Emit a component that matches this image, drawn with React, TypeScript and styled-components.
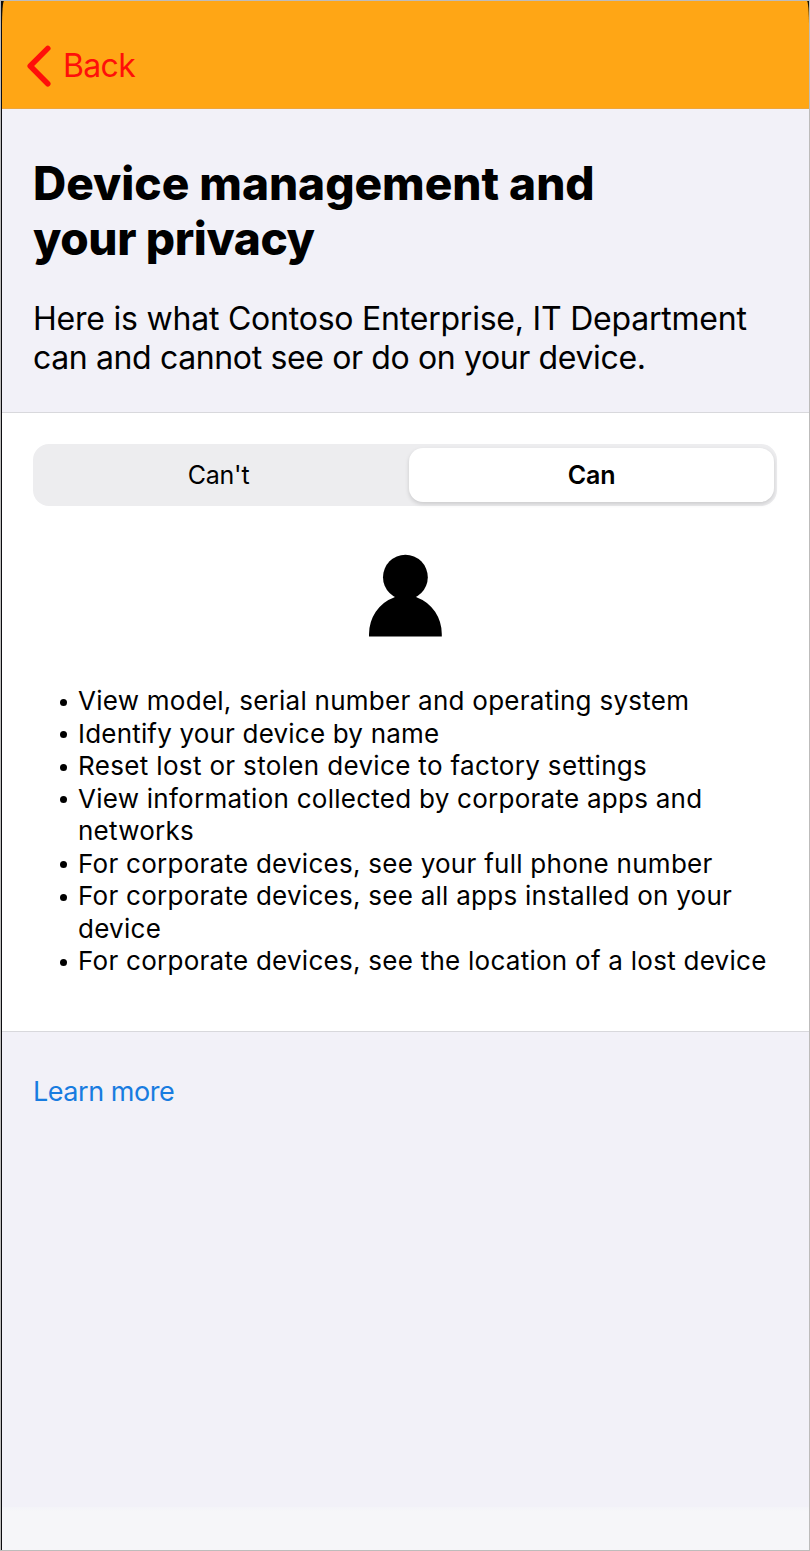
import React, { useState } from 'react';
import styled, { createGlobalStyle } from 'styled-components';

const GlobalStyle = createGlobalStyle`
  * { box-sizing: border-box; }
  body { margin: 0; background: #f2f1f8; font-family: Inter, "Liberation Sans", sans-serif; color: #000; }
`;
const Frame = styled.main`
  width: 810px;
  height: 1551px;
  display: flex;
  border: 1px solid #bdbcbb;
`;
const Screen = styled.div`
  flex: 1;
  min-width: 0;
  display: flex;
  flex-direction: column;
  background: #f2f1f8;
  border-left: 1px solid #0c0c10;
  overflow: hidden;
`;
const NavBacking = styled.div`
  height: 108px;
  flex: none;
  background: #141005;
`;
const NavBar = styled.header`
  height: 108px;
  background: #ffa615;
  border-bottom: 1px solid #eda53c;
  border-radius: 2px 2px 0 0 / 26px 26px 0 0;
  padding: 43px 0 0 25px;
`;
const BackButton = styled.button`
  display: flex;
  align-items: center;
  gap: 11px;
  height: 44px;
  padding: 0;
  border: 0;
  background: none;
  color: #ff0f0a;
  font: 400 32px/44px Inter, sans-serif;
  letter-spacing: -0.65px;
`;
const Line = styled.span<{ $tracking: number }>`
  display: block;
  letter-spacing: ${p => p.$tracking}px;
`;
const Intro = styled.section`
  height: 304px;
  flex: none;
  padding: 47px 31px 0;
  border-bottom: 1px solid #d8d8dc;
`;
const Title = styled.h1`
  margin: 0;
  font-size: 46px;
  line-height: 55px;
  font-weight: 800;
  white-space: nowrap;
`;
const Lead = styled.p`
  margin: 33px 0 0;
  font-size: 32px;
  line-height: 39px;
  white-space: nowrap;
`;
const Panel = styled.section`
  height: 619px;
  flex: none;
  padding: 31px 32px 0 31px;
  background: #fff;
  border-bottom: 1px solid #d8d8dc;
`;
const Segments = styled.div`
  display: grid;
  grid-template-columns: 371px 365px;
  gap: 5px;
  height: 62px;
  padding: 4px 0;
  border-radius: 16px;
  background: #ededef;
`;
const Segment = styled.button<{ $active: boolean }>`
  padding: 0;
  border: 0;
  border-radius: 14px;
  background: ${p => (p.$active ? '#fff' : 'transparent')};
  box-shadow: ${p => (p.$active ? '0 2px 4px rgba(0,0,0,.15)' : 'none')};
  color: #000;
  font: ${p => (p.$active ? 600 : 400)} 25px Inter, sans-serif;
  letter-spacing: -0.2px;
`;
const PersonIcon = styled.svg`
  display: block;
  margin: 48px auto 0;
`;
const List = styled.ul`
  margin: 48px 0 0;
  padding: 0;
  list-style: none;
`;
const Item = styled.li<{ $tracking?: number }>`
  display: flex;
  font-size: 26px;
  line-height: 32.5px;
  letter-spacing: ${p => p.$tracking ?? 0.26}px;
  white-space: pre-line;
  &::before {
    content: '';
    flex: none;
    width: 7px;
    height: 7px;
    margin: 13.5px 11px 0 27px;
    border-radius: 50%;
    background: #000;
  }
`;
const Footer = styled.footer`
  flex: 1;
  padding: 43px 31px 0;
`;
const LearnMore = styled.a`
  color: #187ce0;
  font-size: 27px;
  line-height: 34px;
  letter-spacing: -0.45px;
`;
const HomeArea = styled.div`
  height: 43px;
  flex: none;
  background: linear-gradient(#f4f4f8, #f6f6f9 5px);
`;

const items = [
  { text: 'View model, serial number and operating system' },
  { text: 'Identify your device by name', tracking: 0.19 },
  { text: 'Reset lost or stolen device to factory settings', tracking: 0.34 },
  { text: 'View information collected by corporate apps and\nnetworks' },
  { text: 'For corporate devices, see your full phone number' },
  { text: 'For corporate devices, see all apps installed on your\ndevice' },
  { text: 'For corporate devices, see the location of a lost device' },
];

export default function App() {
  const [tab, setTab] = useState('Can');
  return (
    <Frame>
      <GlobalStyle />
      <Screen>
        <NavBacking>
          <NavBar>
            <BackButton>
              <svg
                width="25"
                height="42"
                viewBox="0 0 25 42"
                fill="none"
                stroke="currentColor"
                strokeWidth="5.5"
                strokeLinecap="round"
                strokeLinejoin="round"
              >
                <path d="M20.8 3.4 3.2 21 20.8 38.8" />
              </svg>
              <span>Back</span>
            </BackButton>
          </NavBar>
        </NavBacking>
        <Intro>
          <Title>
            <Line $tracking={-0.03}>Device management and</Line>
            <Line $tracking={-0.4}>your privacy</Line>
          </Title>
          <Lead>
            <Line $tracking={-0.22}>Here is what Contoso Enterprise, IT Department</Line>
            <Line $tracking={-0.37}>can and cannot see or do on your device.</Line>
          </Lead>
        </Intro>
        <Panel>
          <Segments>
            {["Can't", 'Can'].map(t => (
              <Segment key={t} $active={tab === t} onClick={() => setTab(t)}>{t}</Segment>
            ))}
          </Segments>
          <PersonIcon width="74" height="83" viewBox="0 0 74 83">
            <circle cx="37.4" cy="23.2" r="22.4" />
            <path d="M1 82.4V81A36.4 39 0 0 1 26 43.4L30 41H45L49 43.4A36.4 39 0 0 1 73.8 81V82.4Z" />
          </PersonIcon>
          <List>
            {items.map(i => <Item key={i.text} $tracking={i.tracking}>{i.text}</Item>)}
          </List>
        </Panel>
        <Footer><LearnMore>Learn more</LearnMore></Footer>
        <HomeArea />
      </Screen>
    </Frame>
  );
}
